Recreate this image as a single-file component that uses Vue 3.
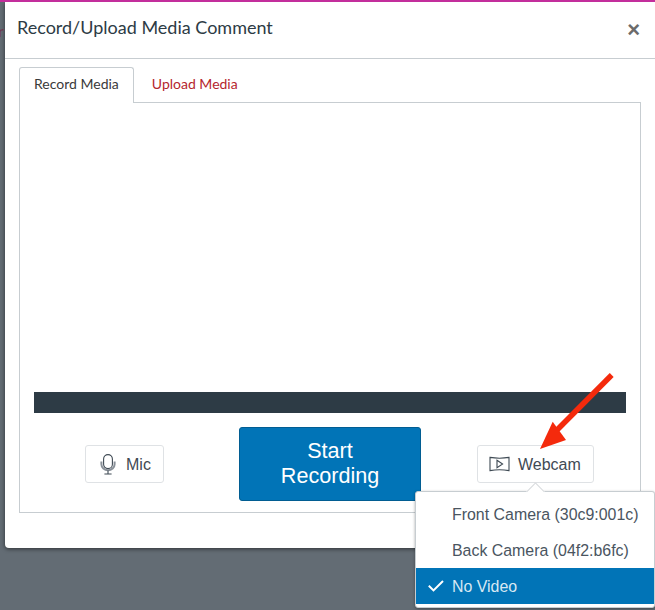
<script setup>
const cameras = [
  { label: 'Front Camera (30c9:001c)', active: false },
  { label: 'Back Camera (04f2:b6fc)', active: false },
  { label: 'No Video', active: true },
]
</script>

<template>
  <div class="page">
    <div class="backdrop-strip"><span class="behind">r</span></div>
    <div class="dialog">
      <header class="head">
        <h1 class="title">Record/Upload Media Comment</h1>
        <span class="close">×</span>
      </header>
      <div class="body">
        <div class="tabs">
          <span class="tab active">Record Media</span>
          <span class="tab link">Upload Media</span>
        </div>
        <section class="panel">
          <div class="stage"></div>
          <div class="meter"></div>
          <div class="controls">
            <button class="tool mic">
              <svg width="16" height="21" viewBox="0 0 16 21" fill="none" stroke="#3f4a54" stroke-width="1.1">
                <rect x="3.6" y="0.6" width="8.8" height="14" rx="4.4" />
                <path d="M1.4 7.5v2.8a6.6 6 0 0 0 13.2 0V7.5" stroke="#8a9199" stroke-width="2" />
                <path d="M8 16.6v3M4.4 20h7.2" />
              </svg>
              <span>Mic</span>
            </button>
            <button class="start">Start<br />Recording</button>
            <button class="tool cam">
              <svg width="21" height="16" viewBox="0 0 21 16" fill="none" stroke="#3f4a54" stroke-width="1.1">
                <path d="M1 1.4q9.5 1.6 19 0v13.2q-9.5-1.6-19 0z" />
                <path d="M8 4.2l5.6 3.8L8 11.8z" />
              </svg>
              <span>Webcam</span>
            </button>
          </div>
        </section>
      </div>
    </div>
    <svg class="arrow" width="90" height="90" viewBox="0 0 90 90">
      <path d="M75.7 4L20 60" stroke="#f42a0c" stroke-width="5.5" fill="none" />
      <path d="M4 78L16.7 50.7L30 69z" fill="#f42a0c" />
    </svg>
    <div class="menu">
      <span class="caret"></span>
      <div v-for="cam in cameras" :key="cam.label" class="item" :class="{ on: cam.active }">
        <svg v-if="cam.active" class="tick" width="16" height="12" viewBox="0 0 16 12" fill="none" stroke="#fff" stroke-width="2">
          <path d="M0.8 5.8l4.7 4.6L15 1" />
        </svg>
        {{ cam.label }}
      </div>
    </div>
  </div>
</template>

<style>
html, body { margin: 0; overflow: hidden; background: #636c74; }
</style>

<style scoped>
.page {
  position: relative;
  width: 655px;
  height: 610px;
  overflow: hidden;
  box-sizing: border-box;
  padding: 2px 0 0 5px;
  background: #636c74;
  font-family: "Liberation Sans", Arial, sans-serif;
}
.page::before {
  content: "";
  position: absolute;
  inset: 0 0 auto 0;
  height: 2px;
  background: #c32e9c;
}
.backdrop-strip {
  position: absolute;
  left: 0;
  top: 2px;
  width: 5px;
  height: 70px;
  overflow: hidden;
}
.behind {
  position: absolute;
  left: -2px;
  top: 19px;
  font: 16px Lato, sans-serif;
  color: #6d3a50;
}
.dialog {
  width: 660px;
  height: 546px;
  background: #fff;
  border-radius: 0 0 4px 4px;
  box-shadow: 0 1px 4px rgba(0, 0, 0, 0.55);
}
.head {
  height: 57px;
  box-sizing: border-box;
  border-bottom: 1px solid #c7cdd1;
  display: flex;
  align-items: flex-start;
  justify-content: space-between;
  padding: 0 25px 0 12px;
}
.title {
  margin: 13px 0 0;
  font: 400 18px/24px Lato, sans-serif;
  color: #2d3b45;
}
.close {
  margin-top: 15px;
  font: 700 22px/26px "Liberation Sans", sans-serif;
  color: #6b6b6b;
}
.body {
  padding: 8px 15px 0 14px;
  width: 622px;
}
.tabs {
  display: flex;
  height: 35px;
  position: relative;
  z-index: 1;
  font: 400 14px/20px Lato, sans-serif;
}
.tab {
  padding: 7px 15px 0;
  box-sizing: border-box;
  height: 36px;
}
.tab.active {
  border: 1px solid #c7cdd1;
  border-bottom: 0;
  border-radius: 3px 3px 0 0;
  background: #fff;
  color: #3a3a3a;
  padding: 6px 14px 0;
}
.tab.link {
  color: #b5252d;
  margin-left: 3px;
}
.panel {
  border: 1px solid #c7cdd1;
  height: 411px;
  box-sizing: border-box;
  display: flex;
  flex-direction: column;
  padding: 0 14px;
}
.stage { height: 289px; }
.meter { height: 21px; background: #2d3b45; }
.controls {
  display: flex;
  align-items: center;
  height: 74px;
  margin-top: 14px;
}
.tool {
  height: 38px;
  box-sizing: border-box;
  border: 1px solid #dfe2e5;
  border-radius: 3px;
  background: #fff;
  color: #3f4a54;
  font: 400 16px "Liberation Sans", sans-serif;
  display: flex;
  align-items: center;
  padding: 2px 0 0;
}
.tool svg { margin-top: -2px; }
.mic { width: 79px; margin-left: 51px; gap: 10px; padding-left: 14px; }
.cam { width: 117px; margin-left: 56px; gap: 8px; padding-left: 11px; }
.start {
  width: 182px;
  height: 74px;
  margin-left: 75px;
  box-sizing: border-box;
  background: #0174b7;
  border: 1px solid #015d92;
  border-radius: 3px;
  color: #fff;
  font: 400 21.6px/25px "Liberation Sans", sans-serif;
  padding: 0 0 2px;
}
.arrow {
  position: absolute;
  left: 536px;
  top: 371px;
}
.menu {
  position: absolute;
  left: 415px;
  top: 491px;
  width: 240px;
  box-sizing: border-box;
  padding: 4px 0 0;
  height: 117px;
  background: #fff;
  border: 1px solid #c7cdd1;
  border-radius: 3px;
  box-shadow: 0 1px 3px rgba(0, 0, 0, 0.35);
}
.caret {
  position: absolute;
  left: 113px;
  top: -7px;
  width: 12px;
  height: 12px;
  background: #fff;
  border: 1px solid #d7dadd;
  border-right: 0;
  border-bottom: 0;
  transform: rotate(45deg);
}
.item {
  position: relative;
  height: 36px;
  box-sizing: border-box;
  padding: 1px 0 0 36px;
  font: 400 15.92px/36px "Liberation Sans", sans-serif;
  color: #4a555f;
}
.item.on {
  background: #0174b7;
  color: #d8e8f3;
}
.tick {
  position: absolute;
  left: 12px;
  top: 12px;
}
</style>
